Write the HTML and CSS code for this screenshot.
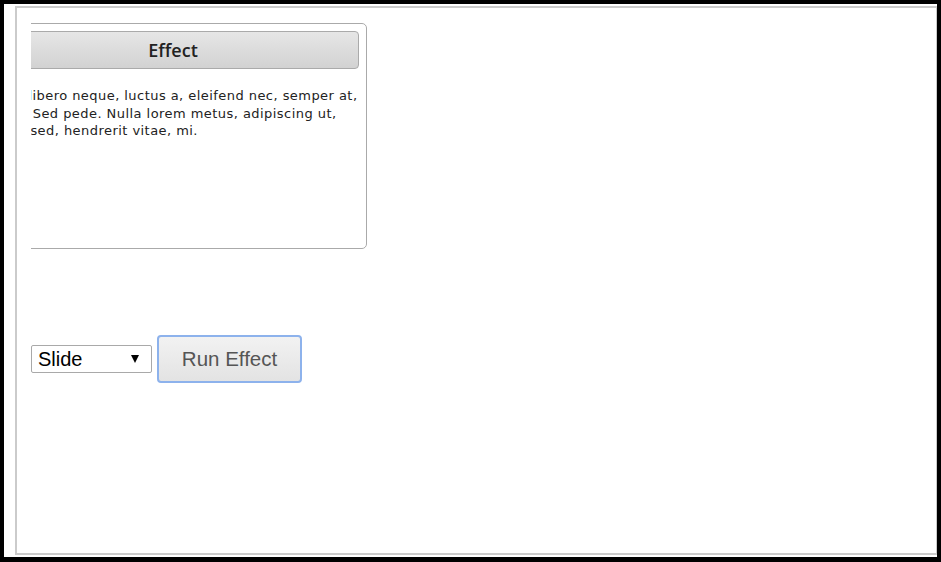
FILE: index.html
```html
<!DOCTYPE html>
<html>
<head>
<meta charset="utf-8">
<link rel="stylesheet" href="styles.css">
</head>
<body>
<div class="frame">
  <div class="page">
    <div class="clip">
      <div class="card">
        <h3 class="card-header">Effect</h3>
        <p class="card-text">Etiam libero neque, luctus a, eleifend nec, semper at,<br>lorem. Sed pede. Nulla lorem metus, adipiscing ut,<br>luctus sed, hendrerit vitae, mi.</p>
      </div>
    </div>
    <div class="controls">
      <span class="select-wrap">
        <select class="select">
          <option>Slide</option>
        </select>
      </span>
      <button class="run">Run Effect</button>
    </div>
  </div>
</div>
</body>
</html>
```

FILE: styles.css
```css
html, body {
  margin: 0;
  padding: 0;
  background: #fff;
}

.frame {
  width: 941px;
  height: 562px;
  box-sizing: border-box;
  border: 4px solid #000;
  border-bottom-width: 5px;
  padding: 2px 0 2px 11px;
  background: #fff;
}

.page {
  height: 100%;
  box-sizing: border-box;
  border: 2px solid #cbcbcb;
  border-right-width: 1px;
  padding: 15px 0 0 14px;
}

.clip {
  width: 336px;
  height: 226px;
  overflow: hidden;
}

.card {
  width: 388px;
  height: 226px;
  margin-left: -52px;
  box-sizing: border-box;
  border: 1px solid #aaa;
  border-radius: 5px;
  padding: 7px;
  background: #fff;
}

.card-header {
  margin: 0;
  height: 38px;
  box-sizing: border-box;
  border: 1px solid #aaa;
  border-radius: 4px;
  background: linear-gradient(#e6e6e6, #d2d2d2);
  font-family: "Open Sans", "DejaVu Sans", sans-serif;
  font-weight: 600;
  font-size: 18px;
  line-height: 36px;
  color: #222;
  text-align: center;
}

.card-text {
  margin: 18px 0 0 -3px;
  font-family: "DejaVu Sans", "Open Sans", sans-serif;
  font-size: 13px;
  letter-spacing: 0.45px;
  line-height: 17.5px;
  color: #222;
  white-space: nowrap;
}

.controls {
  display: flex;
  align-items: center;
  gap: 5px;
  margin-top: 86px;
}

.select-wrap {
  position: relative;
  display: inline-block;
}

.select {
  appearance: none;
  -webkit-appearance: none;
  width: 121px;
  height: 28px;
  box-sizing: border-box;
  border: 1px solid #a9a9a9;
  border-radius: 2px;
  background: #fff;
  font-family: "Liberation Sans", Arial, sans-serif;
  font-size: 20px;
  color: #000;
  padding: 0 0 0 6px;
  margin: 0;
}

.select-wrap::after {
  content: "";
  position: absolute;
  right: 13px;
  top: 10px;
  width: 0;
  height: 0;
  border-left: 4px solid transparent;
  border-right: 4px solid transparent;
  border-top: 8px solid #000;
  pointer-events: none;
}

.run {
  width: 145px;
  height: 48px;
  box-sizing: border-box;
  border: 2px solid #8db2ec;
  border-radius: 4px;
  background: linear-gradient(#f2f2f2, #e3e3e3);
  font-family: "Liberation Sans", Arial, sans-serif;
  font-size: 20.5px;
  color: #555;
  padding: 0;
  margin: 0;
}
```
